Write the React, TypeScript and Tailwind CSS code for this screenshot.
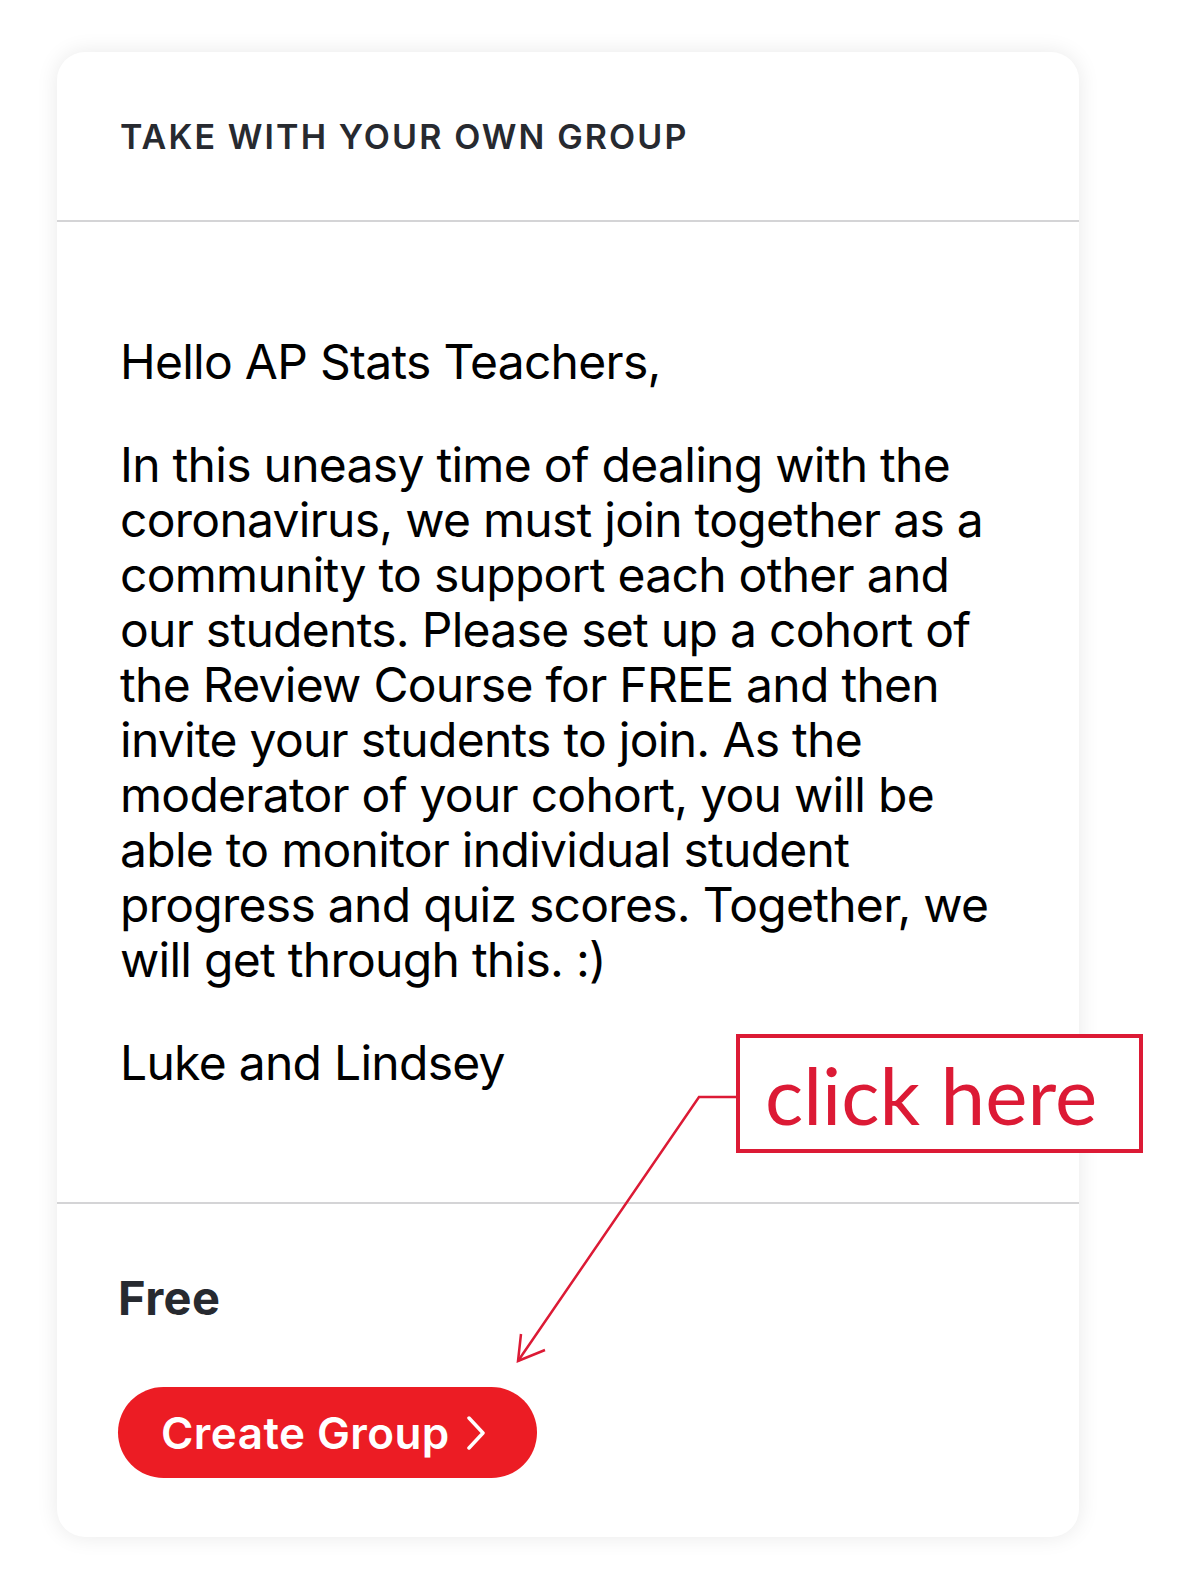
export default function App() {
  return (
    <div className="relative min-h-[1571px] w-[1200px] bg-white pl-[57px] pt-[52px]" style={{ fontFamily: 'Inter, "Noto Sans", sans-serif' }}>
      {/* Card */}
      <div className="flex h-[1485px] w-[1022px] flex-col rounded-[28px] bg-white shadow-[0_0_22px_rgba(0,0,0,0.09)]">
        <div className="flex h-[170px] items-center border-b-2 border-[#d4d4d6] pl-[63px]">
          <h2 className="text-[34px] font-semibold uppercase tracking-[0.062em] text-[#272a30]">Take with your own group</h2>
        </div>

        <div className="flex-1 border-b-2 border-[#d4d4d6] pl-[63px] pr-[60px] pt-[112px] text-[48px] leading-[55px] tracking-[-0.015em] text-black">
          <p>Hello AP Stats Teachers,</p>
          <p className="mt-[48px]">
            In this uneasy time of dealing with the coronavirus, we must join together as a community to support each other and our students. Please set up a cohort of the Review Course for FREE and then invite your students to join. As the moderator of your cohort, you will be able to monitor individual student progress and quiz scores. Together, we will get through this. :)
          </p>
          <p className="mt-[48px]">Luke and Lindsey</p>
        </div>

        <div className="pl-[61px] pt-[66px] pb-[59px]">
          <p className="text-[47px] font-bold leading-[55px] tracking-[0.01em] text-[#272a30]">Free</p>
          <button className="mt-[62px] flex h-[91px] w-[419px] items-center rounded-full bg-[#ec1c24] pl-[43px] text-[44px] font-semibold tracking-[0.01em] text-white">
            Create Group
            <svg className="ml-[16px]" width="20" height="34" viewBox="0 0 20 34" fill="none">
              <path d="M3 2 L17 17 L3 32" stroke="white" strokeWidth="3.5" strokeLinecap="round" strokeLinejoin="round" />
            </svg>
          </button>
        </div>
      </div>

      {/* Annotation */}
      <div className="absolute left-[736px] top-[1034px] flex h-[119px] w-[407px] items-center border-4 border-[#dc1a35] bg-white pl-[25px]">
        <span className="text-[80px] leading-none text-[#dc1a35]" style={{ fontFamily: 'Lato, sans-serif' }}>click here</span>
      </div>
      <svg className="pointer-events-none absolute left-0 top-0" width="1200" height="1571" fill="none">
        <polyline points="737,1097 699,1097 518,1361" stroke="#dc1a35" strokeWidth="2.5" />
        <polyline points="521,1334 518,1361 545,1350" stroke="#dc1a35" strokeWidth="2.5" />
      </svg>
    </div>
  );
}
